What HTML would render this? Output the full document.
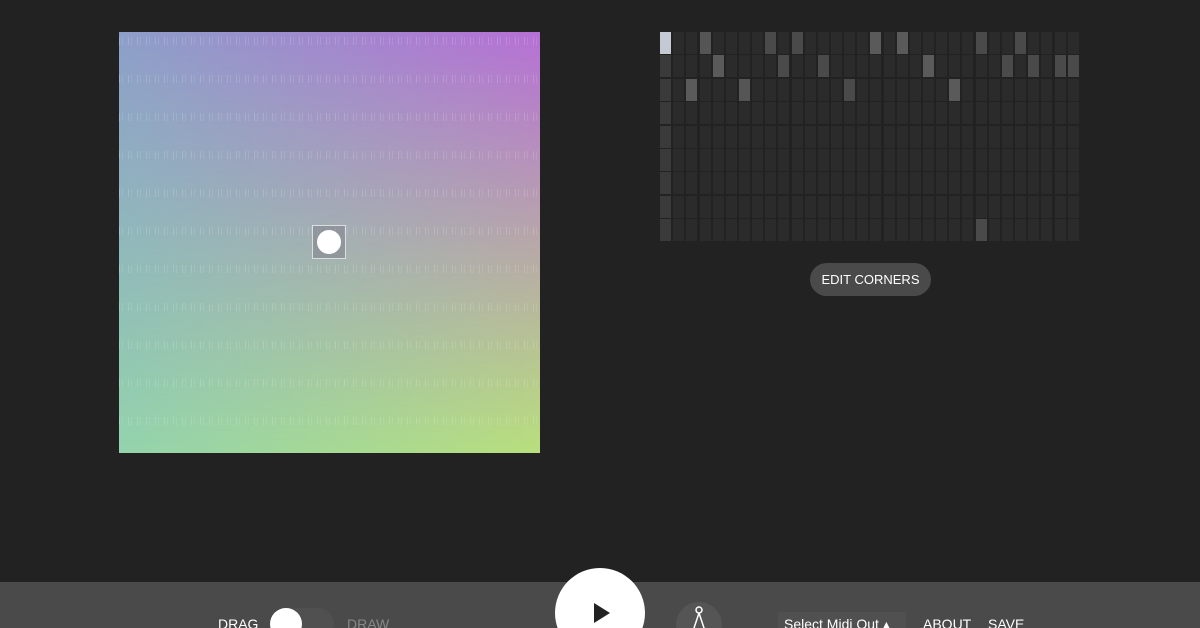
<!DOCTYPE html>
<html><head><meta charset="utf-8"><style>
html,body{margin:0;padding:0;background:#222;width:1200px;height:628px;overflow:hidden;font-family:"Liberation Sans",sans-serif;position:relative}
#sq{position:absolute;left:119px;top:32px;width:421px;height:421px;overflow:hidden}
.g1{position:absolute;inset:0;background:linear-gradient(90deg,#8d9fc9,#b770d6)}
.g2{position:absolute;inset:0;background:linear-gradient(90deg,#93d3ad,#b8df7c);-webkit-mask:linear-gradient(180deg,transparent,#000);mask:linear-gradient(180deg,transparent,#000)}
.st{position:absolute;left:0;width:421px;height:8px;background:repeating-linear-gradient(90deg,rgba(255,255,255,.45) 0 1px,transparent 1px 3px,rgba(255,255,255,.3) 3px 4px,transparent 4px 9px);opacity:.35}
#cur{position:absolute;left:193px;top:193px;width:34px;height:34px;border:1px solid #ddd;background:rgba(120,120,130,.45);box-sizing:border-box}
#cur div{position:absolute;left:4px;top:4px;width:24px;height:24px;border-radius:50%;background:#fff}
#grid{position:absolute;left:660px;top:32px;width:420px;height:210px}
.c{position:absolute;width:11px;height:22px;background:#2b2b2b}
#edit{position:absolute;left:810px;top:263px;width:121px;height:33px;border-radius:17px;background:#4a4a4a;color:#fff;font-size:13px;line-height:33px;text-align:center}
#bar{position:absolute;left:0;top:582px;width:1200px;height:46px;background:#4a4a4a;color:#fff;font-size:14px}
.t{position:absolute;top:34px}
#play{position:absolute;left:555px;top:568px;width:90px;height:90px;border-radius:50%;background:#fff}
</style></head><body>
<div id="sq"><div class="g1"></div><div class="g2"></div>
<div class="st" style="top:5px"></div><div class="st" style="top:43px"></div><div class="st" style="top:81px"></div><div class="st" style="top:119px"></div><div class="st" style="top:157px"></div><div class="st" style="top:195px"></div><div class="st" style="top:233px"></div><div class="st" style="top:271px"></div><div class="st" style="top:309px"></div><div class="st" style="top:347px"></div><div class="st" style="top:385px"></div>
<div id="cur"><div></div></div></div>
<div id="grid"></div>
<div id="edit">EDIT CORNERS</div>
<div id="bar">
<span class="t" style="left:218px">DRAG</span>
<div style="position:absolute;left:270px;top:26px;width:64px;height:32px;border-radius:16px;background:#505050"></div>
<div style="position:absolute;left:270px;top:26px;width:32px;height:32px;border-radius:50%;background:#fff"></div>
<span class="t" style="left:347px;color:#888">DRAW</span>
<div style="position:absolute;left:676px;top:20px;width:46px;height:46px;border-radius:50%;background:#555"></div>
<svg style="position:absolute;left:686px;top:22px" width="26" height="30" viewBox="0 0 26 30"><circle cx="13" cy="6" r="3" fill="none" stroke="#fff" stroke-width="1.5"/><path d="M13 9 L6 30 M13 9 L20 30" stroke="#fff" stroke-width="1.5" fill="none"/></svg>
<div style="position:absolute;left:778px;top:30px;width:128px;height:20px;background:#505050"></div>
<span class="t" style="left:784px">Select Midi Out ▴</span>
<span class="t" style="left:923px">ABOUT</span>
<span class="t" style="left:988px">SAVE</span>
</div>
<div id="play"><svg style="position:absolute;left:37px;top:34px" width="20" height="22"><path d="M2 1 L18 11 L2 21Z" fill="#222"/></svg></div>
<script>
var hi={0:{0:'#c4c9d4',3:'#555',8:'#4a4a4a',10:'#4a4a4a',16:'#5a5a5a',18:'#5a5a5a',24:'#4a4a4a',27:'#4a4a4a'},1:{4:'#5a5a5a',9:'#4a4a4a',12:'#4a4a4a',20:'#5a5a5a',26:'#4a4a4a',28:'#4a4a4a',30:'#4a4a4a',31:'#4a4a4a'},2:{2:'#5a5a5a',6:'#555',14:'#4a4a4a',22:'#5a5a5a'},8:{24:'#4a4a4a'}};
var g=document.getElementById('grid'),h='';
for(var r=0;r<9;r++)for(var c=0;c<32;c++){var col=(hi[r]&&hi[r][c])||(c==0?'#3a3a3a':'#2b2b2b');
h+='<div class="c" style="left:'+(c*13.15).toFixed(1)+'px;top:'+(r*23.4).toFixed(1)+'px;background:'+col+'"></div>';}
g.innerHTML=h;
</script>
</body></html>
